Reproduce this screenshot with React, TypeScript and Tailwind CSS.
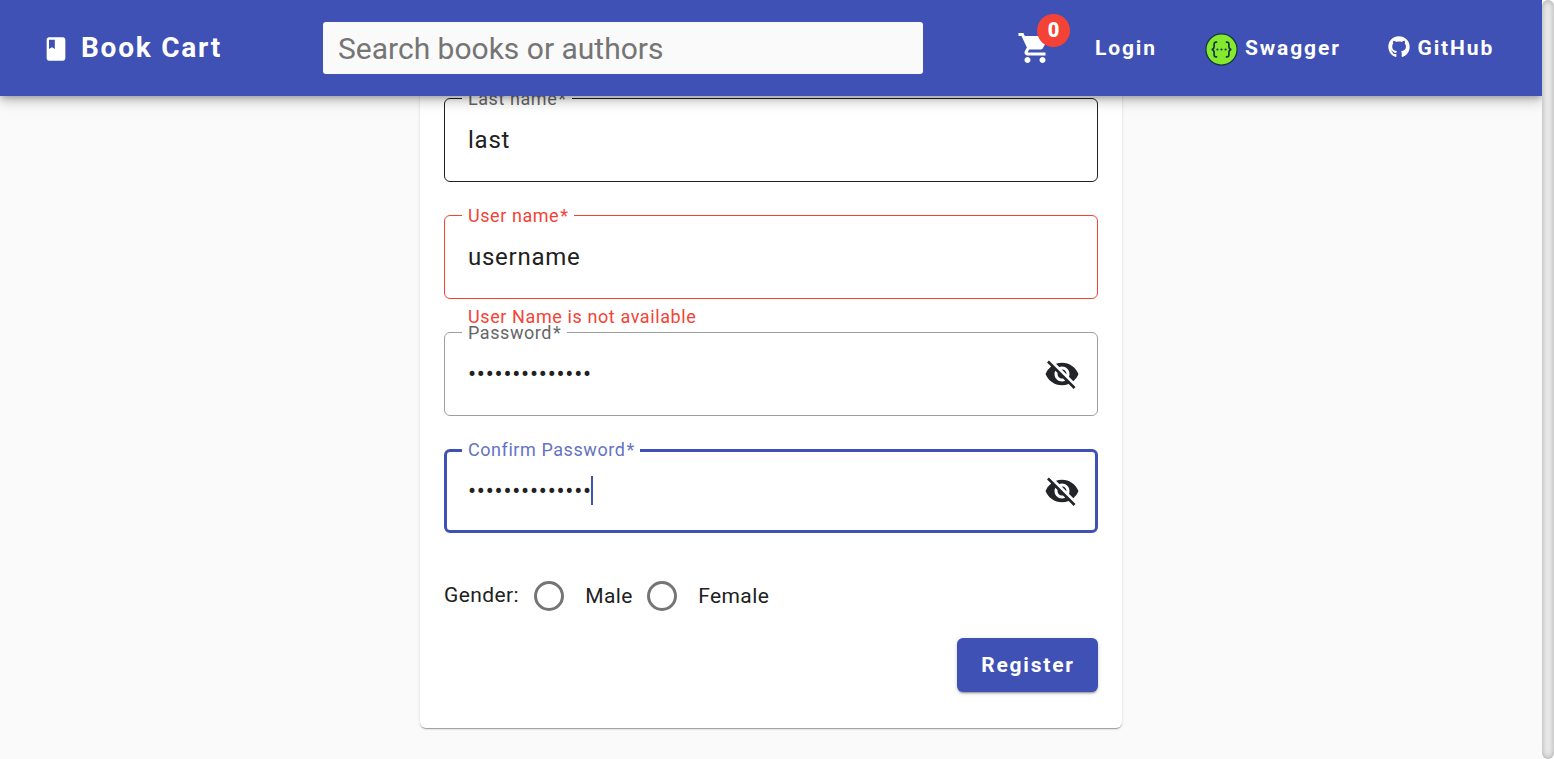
import type { ReactNode } from "react";
import { MdClass, MdShoppingCart, MdVisibilityOff } from "react-icons/md";
import { FaGithub } from "react-icons/fa";

const tones = {
  dark: { border: "border border-[#212121] pl-[17px]", label: "h-[21px] leading-[21px] text-[#666666]" },
  error: { border: "border border-[#f44336] pl-[17px]", label: "h-[21px] leading-[21px] text-[#f44336]" },
  idle: { border: "border border-[#9e9e9e] pl-[17px]", label: "h-[21px] leading-[21px] text-[#666666]" },
  focus: { border: "border-[3px] border-[#3f51b5] pl-[15px]", label: "h-[23px] leading-[21px] text-[#6573c3]" },
};

function Field({ label, tone, hint, children }: { label: string; tone: keyof typeof tones; hint?: string; children: ReactNode }) {
  return (
    <div className="h-[117px]">
      <fieldset className={`h-[94px] min-w-0 rounded-[6px] ${tones[tone].border}`}>
        <legend className={`pr-[5.5px] pl-[6px] text-[18px] tracking-[0.5625px] whitespace-nowrap ${tones[tone].label}`}>
          {label}
          <span className="ml-px">*</span>
        </legend>
        <div className={`flex items-center pb-[10px] pl-[6px] ${tone === "focus" ? "h-[68px] pr-[15px]" : "h-[72px] pr-[17px]"}`}>{children}</div>
      </fieldset>
      {hint && <p className="h-[23px] pl-6 text-[18px] leading-[36px] tracking-[0.6px] text-[#f44336]">{hint}</p>}
    </div>
  );
}

const inputClass = "h-[36px] bg-transparent text-[24px] tracking-[0.75px] text-[#212121] outline-none";

function Radio({ label }: { label: string }) {
  return (
    <label className="flex items-center">
      <span className="h-[30px] w-[30px] rounded-full border-[3px] border-[#757575]" />
      <span className="pl-[21.3px] text-[21px] leading-[30px] tracking-[0.375px]">{label}</span>
    </label>
  );
}

function SwaggerLogo() {
  return (
    <svg width="33" height="33" viewBox="0 0 33 33" fill="none">
      <circle cx="16.5" cy="16.5" r="15.6" fill="#85ea2d" stroke="#173647" strokeWidth="1.3" />
      <g stroke="#173647" strokeWidth="1.7">
        <path d="M12.2 9.1h-1.1c-1.5 0-2 .8-2 2.2v2.2c0 1.8-.7 2.8-2.5 3 1.8.2 2.5 1.2 2.5 3v2.2c0 1.4.5 2.2 2 2.2h1.1" />
        <path d="M20.8 9.1h1.1c1.5 0 2 .8 2 2.2v2.2c0 1.8.7 2.8 2.5 3-1.8.2-2.5 1.2-2.5 3v2.2c0 1.4-.5 2.2-2 2.2h-1.1" />
      </g>
      <g fill="#173647">
        <circle cx="12.4" cy="16.5" r="1.1" />
        <circle cx="16.5" cy="16.5" r="1.1" />
        <circle cx="20.6" cy="16.5" r="1.1" />
      </g>
    </svg>
  );
}

export default function App() {
  return (
    <div className="flex h-[759px] w-[1554px] overflow-hidden bg-[#fafafa] font-['Roboto',sans-serif] text-[#212121]">
      <div className="flex min-w-0 flex-1 flex-col overflow-hidden">
        <header className="relative z-10 flex h-24 shrink-0 items-center bg-[#3f51b5] text-[21px] font-bold tracking-[1.875px] text-white shadow-[0_3px_5px_-1px_rgba(0,0,0,0.2),0_6px_10px_0_rgba(0,0,0,0.14),0_1px_18px_0_rgba(0,0,0,0.12)]">
          <a className="flex w-[323px] items-center pl-[41.5px]">
            <MdClass className="mt-px mr-[11.5px] h-7 w-7" />
            <span className="text-[28px] leading-9 tracking-[1.75px]">Book Cart</span>
          </a>
          <input
            className="h-[52px] w-[600px] rounded-[3px] bg-[#fafafa] px-[15px] text-[30px] font-normal tracking-normal outline-none placeholder:text-[#757575]"
            placeholder="Search books or authors"
          />
          <a className="relative ml-[94px] flex">
            <MdShoppingCart className="h-9 w-9" />
            <span className="absolute -top-4 left-5 flex h-[33px] w-[33px] items-center justify-center rounded-full bg-[#f44336] pb-[2px] text-[20px] leading-none font-black tracking-normal">0</span>
          </a>
          <a className="ml-[42px] w-[110px] pt-px">Login</a>
          <a className="flex w-[182.5px] items-center gap-[7px]">
            <span className="mt-[3px]"><SwaggerLogo /></span>
            <span className="pt-px">Swagger</span>
          </a>
          <a className="flex items-center gap-2">
            <FaGithub className="-mt-[3px] h-[22px] w-[22px]" />
            <span className="pt-px">GitHub</span>
          </a>
        </header>

        <main className="-mt-10 flex justify-center">
          <form className="flex h-[672px] w-[702px] flex-col rounded-[6px] bg-white px-6 pt-8 shadow-[0_2px_1px_-1px_rgba(0,0,0,0.2),0_1px_1px_0_rgba(0,0,0,0.14),0_1px_3px_0_rgba(0,0,0,0.12)]">
            <Field label="Last name" tone="dark">
              <input className={`${inputClass} w-full`} defaultValue="last" />
            </Field>
            <Field label="User name" tone="error" hint="User Name is not available">
              <input className={`${inputClass} w-full`} defaultValue="username" />
            </Field>
            <Field label="Password" tone="idle">
              <input type="password" className={`${inputClass} flex-1`} defaultValue="password123456" />
              <MdVisibilityOff className="h-9 w-9 text-[#212529]" />
            </Field>
            <Field label="Confirm Password" tone="focus">
              <input type="password" className={`${inputClass} w-[123px]`} defaultValue="password123456" />
              <span className="mb-[2px] h-[29px] w-[2px] bg-[#3f51b5]" />
              <MdVisibilityOff className="ml-auto h-9 w-9 text-[#212529]" />
            </Field>
            <div className="mt-[25px] flex items-center">
              <span className="-mt-[2px] w-[90px] text-[21px] leading-[30px] tracking-[0.375px]">Gender:</span>
              <div className="flex gap-[14.2px]">
                <Radio label="Male" />
                <Radio label="Female" />
              </div>
            </div>
            <button type="button" className="mt-[27px] h-[54px] w-[141px] self-end rounded-[6px] bg-[#3f51b5] pt-px pl-px text-[21px] font-bold tracking-[1.8px] text-white shadow-[0_3px_1px_-2px_rgba(0,0,0,0.2),0_2px_2px_0_rgba(0,0,0,0.14),0_1px_5px_0_rgba(0,0,0,0.12)]">
              Register
            </button>
          </form>
        </main>
      </div>
      <div className="w-3 shrink-0 bg-white">
        <div className="h-full rounded-[6px] bg-[#ebebeb] shadow-[inset_0_0_6px_rgba(0,0,0,0.3)]" />
      </div>
    </div>
  );
}
